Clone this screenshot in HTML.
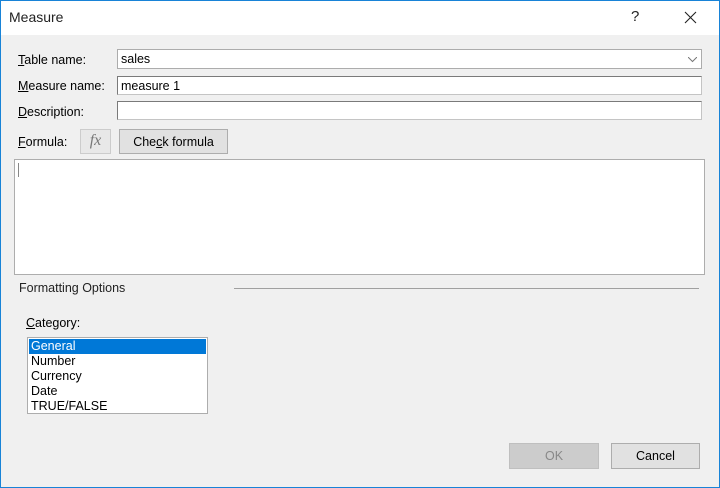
<!DOCTYPE html><html><head><style>
body{margin:0;width:720px;height:488px;overflow:hidden;font-family:"Liberation Sans",sans-serif;font-size:12.5px;color:#000}
.win{position:absolute;left:0;top:0;width:720px;height:488px;background:#f0f0f0}
.bd{position:absolute;left:0;top:0;width:720px;height:488px;box-sizing:border-box;border:1px solid #1883d7}
.tb{position:absolute;left:0;top:0;width:720px;height:35px;background:#fff}
.a{position:absolute}
.in{position:absolute;background:#fff;border:1px solid #7a7a7a;border-color:#7a7a7a #c4c4c4 #c4c4c4 #7a7a7a;box-sizing:border-box;padding:2px 3px 0}
.btn{position:absolute;background:#e1e1e1;border:1px solid #adadad;box-sizing:border-box;text-align:center}
</style></head><body><div class="win">
<div class="tb"><div class="a" style="left:9px;top:9px;font-size:14px;color:#222">Measure</div>
<div class="a" style="left:631px;top:8px;font-size:15px;color:#222">?</div>
<svg class="a" style="left:684px;top:11px" width="13" height="13"><path d="M1 1L12 12M12 1L1 12" stroke="#222" stroke-width="1.1"/></svg></div>
<div class="a" style="left:18px;top:53px"><u>T</u>able name:</div>
<div class="in" style="left:117px;top:49px;width:585px;height:20px;border-color:#acacac">sales</div>
<svg class="a" style="left:688px;top:57px" width="9" height="6"><path d="M0 0L4.5 4.5L9 0" stroke="#777" fill="none"/></svg>
<div class="a" style="left:18px;top:79px"><u>M</u>easure name:</div>
<div class="in" style="left:117px;top:76px;width:585px;height:19px">measure 1</div>
<div class="a" style="left:18px;top:105px"><u>D</u>escription:</div>
<div class="in" style="left:117px;top:101px;width:585px;height:19px"></div>
<div class="a" style="left:18px;top:135px"><u>F</u>ormula:</div>
<div class="btn" style="left:80px;top:129px;width:31px;height:25px;background:#e8e8e8;border-color:#ccc;font-family:'Liberation Serif',serif;font-style:italic;font-size:16px;color:#777;line-height:22px">fx</div>
<div class="btn" style="left:119px;top:129px;width:109px;height:25px;line-height:24px">Che<u>c</u>k formula</div>
<div class="in" style="left:14px;top:159px;width:691px;height:116px;border-color:#adadad"><div style="width:1px;height:14px;background:#888;margin-top:1px"></div></div>
<div class="a" style="left:19px;top:281px;color:#222">Formatting Options</div>
<div class="a" style="left:234px;top:288px;width:465px;height:1px;background:#a0a0a0"></div>
<div class="a" style="left:26px;top:316px"><u>C</u>ategory:</div>
<div class="in" style="left:27px;top:337px;width:181px;height:77px;padding:1px;border-color:#adadad;line-height:15px">
<div style="background:#0078d7;color:#fff;padding-left:2px">General</div>
<div style="padding-left:2px">Number</div><div style="padding-left:2px">Currency</div><div style="padding-left:2px">Date</div><div style="padding-left:2px">TRUE/FALSE</div></div>
<div class="btn" style="left:509px;top:443px;width:90px;height:26px;background:#ccc;border-color:#bfbfbf;color:#888;line-height:24px">OK</div>
<div class="btn" style="left:611px;top:443px;width:89px;height:26px;line-height:24px">Cancel</div>
<div class="bd"></div>
</div></body></html>
